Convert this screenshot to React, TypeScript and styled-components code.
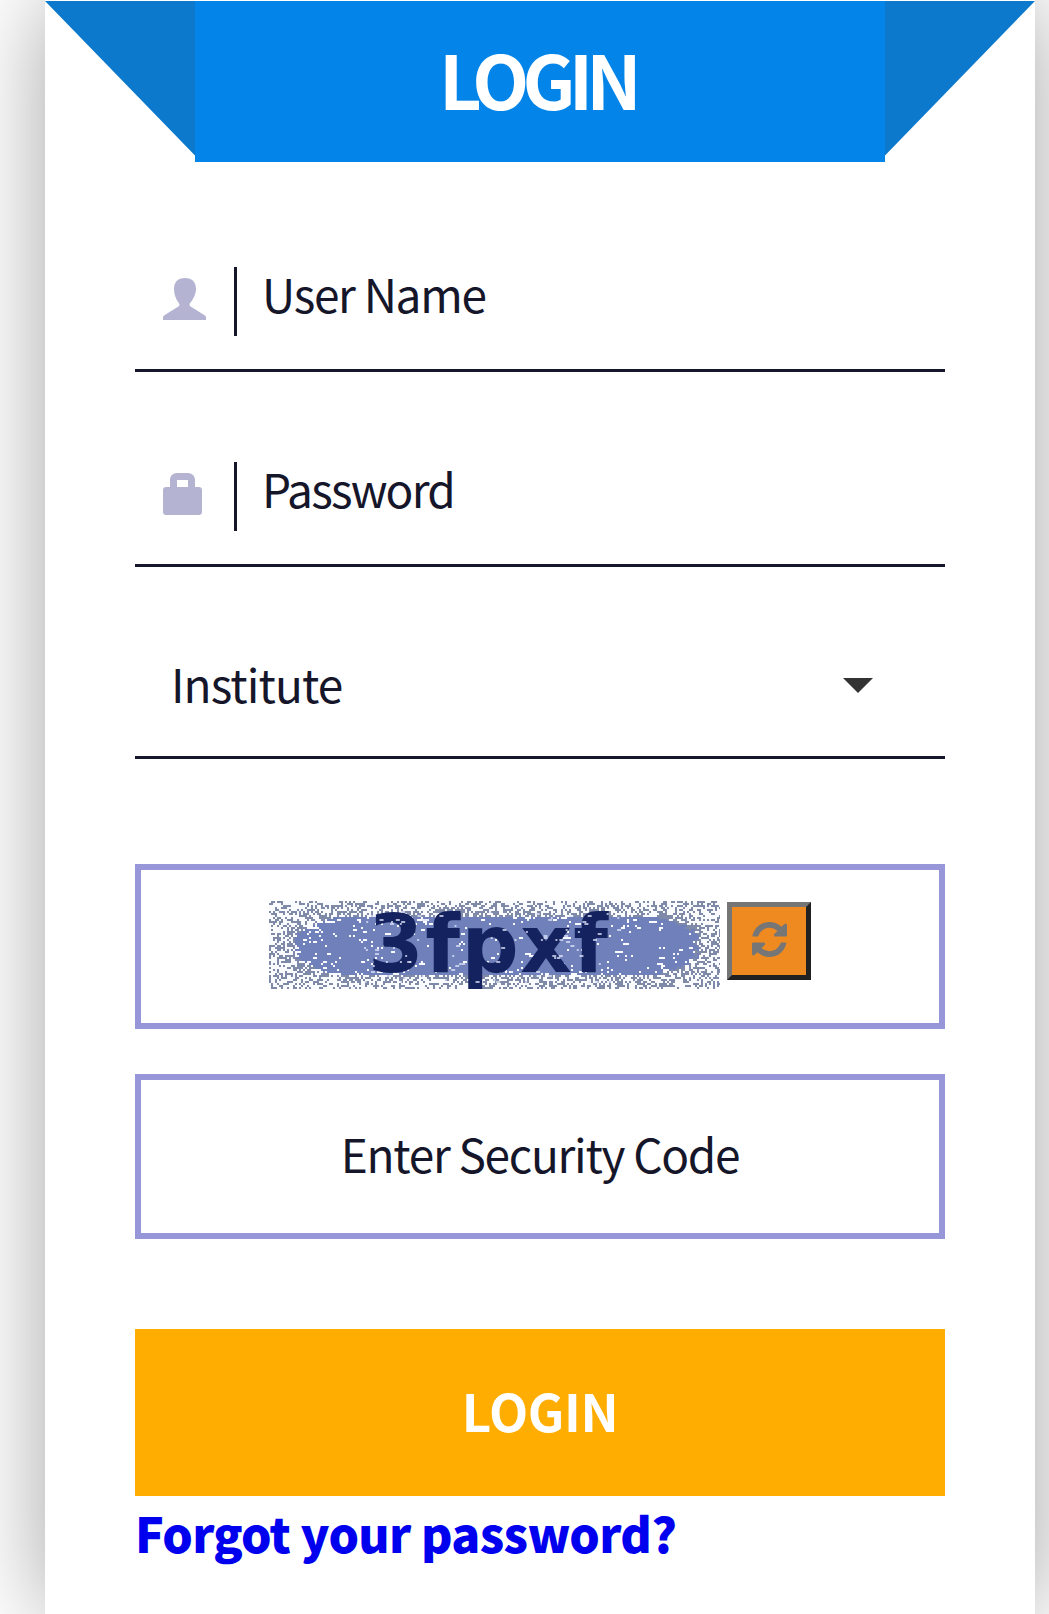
import React from "react";
import styled, { createGlobalStyle } from "styled-components";

const Global = createGlobalStyle`
  html, body { margin: 0; padding: 0; background: #fff; }
  * { box-sizing: border-box; }
`;

const bodyFont = `"Noto Sans CJK JP", "Noto Sans", sans-serif`;
const boldFont = `"Noto Sans CJK JP", "Noto Sans", sans-serif`;

const Page = styled.div`
  width: 1049px;
  height: 1614px;
  overflow: hidden;
  padding: 0 14px 0 45px;
`;

const Card = styled.main`
  width: 990px;
  height: 1614px;
  background: #fff;
  box-shadow: 0 0 90px rgba(0, 0, 0, 0.36);
  padding-top: 1px;
`;

const Ribbon = styled.header`
  position: relative;
  width: 690px;
  height: 161px;
  margin: 0 auto;
  background: #0284e8;
  display: flex;
  align-items: center;
  justify-content: center;
  padding: 0 6px 8px 0;

  &::before,
  &::after {
    content: "";
    position: absolute;
    top: 0;
    width: 150px;
    height: 161px;
    background: #0c79cd;
  }
  &::before {
    left: -150px;
    clip-path: polygon(0 0, 100% 0, 100% 100%, 100% 96%);
  }
  &::after {
    right: -150px;
    clip-path: polygon(0 0, 100% 0, 0 96%);
  }
`;

const Title = styled.h1`
  margin: 0;
  font-family: ${boldFont};
  font-weight: 700;
  font-size: 74px;
  line-height: 1;
  letter-spacing: -6.8px;
  color: #fff;
`;

const Form = styled.form`
  padding: 0 90px;
  display: flex;
  flex-direction: column;
`;

const Field = styled.div<{ $top: number }>`
  margin-top: ${(p) => p.$top}px;
  padding: 0 0 33px 28px;
  display: flex;
  align-items: center;
  border-bottom: 3px solid #16162a;
`;

const IconSlot = styled.span`
  width: 74px;
  height: 69px;
  display: flex;
  align-items: center;
  flex: none;
  border-right: 3px solid #16162a;
  color: #b4b4d2;
  svg { display: block; margin-bottom: 6px; }
`;

const Placeholder = styled.span<{ $spacing: number }>`
  margin-left: 25px;
  padding-bottom: 16px;
  font-family: ${bodyFont};
  font-size: 46px;
  line-height: 53px;
  letter-spacing: ${(p) => p.$spacing}px;
  color: #16162a;
`;

const Select = styled.div`
  margin-top: 98px;
  padding: 0 72px 54px 36px;
  height: 94px;
  display: flex;
  align-items: flex-end;
  justify-content: space-between;
  border-bottom: 3px solid #16162a;
`;

const SelectValue = styled.span`
  font-family: ${bodyFont};
  font-size: 46px;
  line-height: 37px;
  letter-spacing: -0.9px;
  color: #16162a;
`;

const Arrow = styled.svg`
  display: block;
  width: 30px;
  height: 15px;
  margin-bottom: 9px;
`;

const CaptchaBox = styled.div`
  margin-top: 105px;
  height: 165px;
  border: 6px solid #9696d8;
  padding-top: 31px;
  display: flex;
  justify-content: center;
  align-items: flex-start;
  gap: 7px;
`;

const CaptchaImage = styled.svg`
  display: block;
  width: 451px;
  height: 88px;
  flex: none;
  overflow: visible;
`;

const RefreshButton = styled.button`
  width: 84px;
  height: 78px;
  margin-top: 1px;
  padding: 0 0 3px;
  border: 5px solid;
  border-color: #767676 #212121 #212121 #767676;
  background: #ee8a1f;
  color: #767676;
  display: flex;
  align-items: center;
  justify-content: center;
`;

const CodeBox = styled.div`
  margin-top: 45px;
  height: 165px;
  border: 6px solid #9696d8;
  padding-bottom: 8px;
  display: flex;
  align-items: center;
  justify-content: center;
  font-family: ${bodyFont};
  font-size: 46px;
  letter-spacing: -1.3px;
  color: #16162a;
`;

const LoginButton = styled.button`
  margin-top: 90px;
  height: 167px;
  border: 0;
  padding: 0 0 4px;
  background: #ffad00;
  color: #fff;
  font-family: ${boldFont};
  font-weight: 700;
  font-size: 51px;
  line-height: 1;
  letter-spacing: -0.4px;
`;

const ForgotLink = styled.a`
  display: block;
  margin-top: 5px;
  font-family: ${boldFont};
  font-weight: 900;
  font-size: 48px;
  line-height: 62px;
  letter-spacing: -0.65px;
  color: #0000ee;
  text-decoration: none;
`;

const PersonIcon = () => (
  <svg width="43" height="42" viewBox="0 0 43 42" fill="currentColor" aria-hidden="true">
    <path d="M22 0C14.500 0 11 4.500 11 11c0 5 1.800 10.500 4.800 14 .8 1 .9 2.500 0 3.300L1 37.500C.3 38 0 38.700 0 39.500V42h43v-2.500c0-.8-.3-1.500-1-2l-14.800-9.200c-.9-.8-.8-2.300 0-3.300C30.200 21.500 33 16 33 11 33 4.500 29.500 0 22 0z" />
  </svg>
);

const LockIcon = () => (
  <svg width="39" height="42" viewBox="0 0 39 42" fill="currentColor" aria-hidden="true">
    <path
      fillRule="evenodd"
      d="M7 14V7c0-4 3-7 7-7h11c4 0 7 3 7 7v7h4c1.700 0 3 1.300 3 3v22c0 1.700-1.300 3-3 3H3c-1.700 0-3-1.300-3-3V17c0-1.700 1.300-3 3-3h4zm7-7v7h11V7H14z"
    />
  </svg>
);

const RefreshIcon = () => (
  <svg width="35" height="35" viewBox="0 128 1536 1536" fill="currentColor" aria-hidden="true">
    <path d="M1511 1056q0 5-1 7-64 268-268 434.500t-478 166.500q-146 0-282.500-55t-243.500-157l-129 129q-19 19-45 19t-45-19-19-45v-448q0-26 19-45t45-19h448q26 0 45 19t19 45-19 45l-137 137q71 66 161 102t187 36q134 0 250-65t186-179q11-17 53-117 8-23 30-23h192q13 0 22.500 9.500t9.500 22.500zm25-800v448q0 26-19 45t-45 19h-448q-26 0-45-19t-19-45 19-45l138-138q-148-137-349-137-134 0-250 65t-186 179q-11 17-53 117-8 23-30 23h-199q-13 0-22.500-9.500t-9.500-22.500v-7q65-268 270-434.500t480-166.500q146 0 284 55.500t245 156.500l130-129q19-19 45-19t45 19 19 45z" />
  </svg>
);

function makeRandom(start: number) {
  let seed = start;
  return () => {
    seed = (seed * 16807) % 2147483647;
    return seed / 2147483647;
  };
}

function buildNoise() {
  const cells: { x: number; y: number; w: number; c: string }[] = [];
  const rnd = makeRandom(91237);
  // Dense streak across most of the image, sparse speckle at the edges.
  for (let y = 0; y < 88; y += 2) {
    const vertical = Math.min(1, 1.25 - Math.abs(y - 44) / 40);
    for (let x = 0; x < 451; x += 2) {
      const horizontal = Math.min(1, (Math.min(x, 451 - x) + 20) / 90);
      const density = 0.3 + 0.5 * Math.max(0, vertical) * horizontal;
      if (rnd() < density) {
        const w = density > 0.55 && rnd() < 0.6 ? 8 : 2;
        cells.push({ x, y, w, c: density > 0.55 ? "#6f80ba" : "#7f8aa8" });
      }
    }
  }
  return cells;
}

function buildSpecks() {
  const specks: { x: number; y: number; w: number }[] = [];
  const rnd = makeRandom(5501);
  for (let i = 0; i < 90; i++) {
    specks.push({
      x: 95 + rnd() * 255,
      y: 10 + Math.floor(rnd() * 36) * 2,
      w: 2 + Math.floor(rnd() * 2) * 2,
    });
  }
  return specks;
}

const noise = buildNoise();
const specks = buildSpecks();

const Captcha = () => (
  <CaptchaImage viewBox="0 0 451 88" role="img" aria-label="security code">
    <rect width="451" height="88" fill="#fafbff" />
    {noise.map((n, i) => (
      <rect key={i} x={n.x} y={n.y} width={Math.min(n.w, 451 - n.x)} height="2" fill={n.c} />
    ))}
    <text
      x="99"
      y="71"
      fontFamily='"DejaVu Sans", sans-serif'
      fontWeight="700"
      fontSize="80"
      letterSpacing="1.500"
      fill="#14235f"
    >
      3fpxf
    </text>
    {specks.map((s, i) => (
      <rect key={i} x={s.x} y={s.y} width={s.w} height="2" fill="#dfe4fa" opacity="0.75" />
    ))}
  </CaptchaImage>
);

export default function App() {
  return (
    <Page>
      <Global />
      <Card>
        <Ribbon>
          <Title>LOGIN</Title>
        </Ribbon>
        <Form>
          <Field $top={105}>
            <IconSlot>
              <PersonIcon />
            </IconSlot>
            <Placeholder $spacing={-1.3}>User Name</Placeholder>
          </Field>
          <Field $top={90}>
            <IconSlot>
              <LockIcon />
            </IconSlot>
            <Placeholder $spacing={-1.8}>Password</Placeholder>
          </Field>
          <Select>
            <SelectValue>Institute</SelectValue>
            <Arrow viewBox="0 0 30 15" aria-hidden="true">
              <path d="M0 0h30L15 15z" fill="#333" />
            </Arrow>
          </Select>
          <CaptchaBox>
            <Captcha />
            <RefreshButton type="button" aria-label="Refresh">
              <RefreshIcon />
            </RefreshButton>
          </CaptchaBox>
          <CodeBox>Enter Security Code</CodeBox>
          <LoginButton type="button">LOGIN</LoginButton>
          <ForgotLink href="#">Forgot your password?</ForgotLink>
        </Form>
      </Card>
    </Page>
  );
}
